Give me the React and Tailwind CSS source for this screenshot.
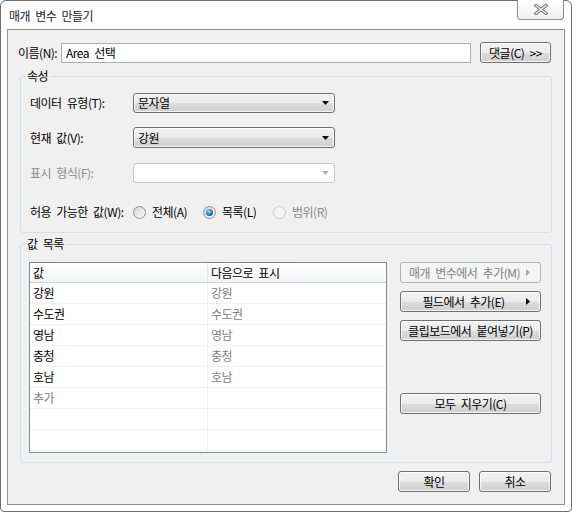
import React from 'react';

const btnFace =
  'border-[#707070] bg-[linear-gradient(#f2f2f2_0%,#ebebeb_50%,#dddddd_51%,#cfcfcf_100%)] shadow-[inset_0_0_0_1px_rgba(255,255,255,0.75)] text-black';
const btnDisabled = 'border-[#adb2b5] bg-[#f4f4f4] text-[#838383]';

const Arrow = ({ color = '#000' }) => (
  <svg width="4" height="7" viewBox="0 0 4 7">
    <path d="M0 0L4 3.5L0 7Z" fill={color} />
  </svg>
);

const WinButton = ({ children, disabled = false, arrow = false, className = '' }) => (
  <div
    className={`flex h-[21px] items-center rounded-[3px] border ${disabled ? btnDisabled : btnFace} ${className}`}
  >
    <span className="flex-1 text-center">{children}</span>
    {arrow && (
      <span className="flex w-[14px] justify-start">
        <Arrow color={disabled ? '#a8a8a8' : '#000'} />
      </span>
    )}
  </div>
);

const Combo = ({ value, disabled = false, height = 'h-[20px]' }) => (
  <div
    className={`flex ${height} w-[202px] items-center justify-between rounded-[3px] border pl-[4px] pr-[5px] ${
      disabled ? 'border-[#c5c5c5] bg-white' : btnFace
    }`}
  >
    <span>{value}</span>
    <svg width="7" height="4" viewBox="0 0 7 4">
      <path d="M0 0H7L3.5 4Z" fill={disabled ? '#b0b0b0' : '#000'} />
    </svg>
  </div>
);

const Radio = ({ label, checked = false, disabled = false }) => (
  <div className={`flex w-[70px] items-center gap-[6px] ${disabled ? 'text-[#8a8a8a]' : ''}`}>
    <span
      className={`flex h-[13px] w-[13px] items-center justify-center rounded-full border ${
        disabled
          ? 'border-[#c8c8c8] bg-[#f4f4f4]'
          : 'border-[#8e8f8f] bg-[linear-gradient(135deg,#d4d4d4,#fcfcfc)]'
      }`}
    >
      {checked && (
        <span className="h-[7px] w-[7px] rounded-full bg-[radial-gradient(circle_at_40%_35%,#a8dcf7,#1f73b5_55%,#0c4a85)]" />
      )}
    </span>
    <span>{label}</span>
  </div>
);

const rows = [
  ['강원', '강원'],
  ['수도권', '수도권'],
  ['영남', '영남'],
  ['충청', '충청'],
  ['호남', '호남'],
  ['추가', ''],
  ['', ''],
  ['', ''],
];

const App = () => {
  return (
    <div className="h-[512px] w-[572px] bg-white font-['Noto_Sans_CJK_KR','Noto_Sans',sans-serif] text-[12px] tracking-[-0.5px] [word-spacing:3px] text-black">
      <div className="flex h-full w-full flex-col rounded-t-[6px] rounded-b-[4px] border border-[#6e6e6e] px-[6px] pb-[6px]">
        {/* title bar */}
        <div className="flex h-[28px] items-start justify-between">
          <div className="pl-[2px] pt-[7px] leading-[16px] text-[#1b1b1b]">매개 변수 만들기</div>
          <div className="-mt-px mr-px flex h-[20px] w-[47px] items-center justify-center rounded-b-[4px] border border-t-0 border-[#8c8c8c] bg-[linear-gradient(#ffffff,#f0f0f0)]">
            <svg width="14" height="11" viewBox="0 0 14 11">
              <path d="M2 1.5L12 9.5M12 1.5L2 9.5" stroke="#6f6f6f" strokeWidth="3.4" strokeLinecap="square" />
              <path d="M2 1.5L12 9.5M12 1.5L2 9.5" stroke="#f4f4f4" strokeWidth="1.4" strokeLinecap="square" />
            </svg>
          </div>
        </div>

        {/* panel */}
        <div className="flex flex-1 flex-col border border-[#8e8f8f] bg-[#f0f0f0] pl-[12px] pr-[12px] pt-[12px] pb-[12px]">
          {/* name row */}
          <div className="-ml-[2px] flex h-[21px] items-center">
            <div className="w-[43px]">이름(N):</div>
            <div className="flex h-[20px] w-[410px] items-center border border-[#abadb3] bg-white pl-[4px]">Area 선택</div>
            <WinButton className="ml-[9px] w-[71px]">댓글(C) &gt;&gt;</WinButton>
          </div>

          {/* 속성 */}
          <fieldset className="mt-[6px] rounded-[3px] border border-[#d5dfe5]">
            <legend className="ml-[4px] px-[2px] leading-[14px]">속성</legend>
            <div className="flex flex-col pl-[9px] pt-[10px] pb-[12px]">
              <div className="flex h-[20px] items-center">
                <div className="w-[103px]">데이터 유형(T):</div>
                <Combo value="문자열" />
              </div>
              <div className="mt-[14px] flex h-[21px] items-center">
                <div className="w-[103px]">현재 값(V):</div>
                <Combo value="강원" height="h-[21px]" />
              </div>
              <div className="mt-[15px] flex h-[20px] items-center">
                <div className="w-[103px] text-[#8a8a8a]">표시 형식(F):</div>
                <Combo value="" disabled />
              </div>
              <div className="mt-[21px] flex h-[16px] items-center">
                <div className="w-[103px]">허용 가능한 값(W):</div>
                <Radio label="전체(A)" />
                <Radio label="목록(L)" checked />
                <Radio label="범위(R)" disabled />
              </div>
            </div>
          </fieldset>

          {/* 값 목록 */}
          <fieldset className="mt-[4px] rounded-[3px] border border-[#d5dfe5]">
            <legend className="ml-[4px] px-[2px] leading-[14px]">값 목록</legend>
            <div className="flex pl-[8px] pt-[11px] pb-[9px]">
              <div className="h-[191px] w-[358px] overflow-hidden border border-[#828790] bg-white">
                <div className="flex h-[20px] border-b border-[#d5d5d5] bg-[linear-gradient(#ffffff,#f2f3f5)]">
                  <div className="flex w-[177px] items-center pl-[3px]">값</div>
                  <div className="flex flex-1 items-center border-l border-[#e5e5e5] pl-[3px]">다음으로 표시</div>
                </div>
                {rows.map(([v, d], i) => (
                  <div key={i} className="flex h-[21px] border-b border-[#f0f0f0]">
                    <div className={`flex w-[177px] items-center pl-[3px] ${v === '추가' ? 'text-[#808080]' : ''}`}>{v}</div>
                    <div className="flex flex-1 items-center border-l border-[#f0f0f0] pl-[3px] text-[#808080]">{d}</div>
                  </div>
                ))}
              </div>

              <div className="ml-[13px] flex w-[141px] flex-col">
                <WinButton disabled arrow className="pl-[2px]">매개 변수에서 추가(M)</WinButton>
                <WinButton arrow className="mt-[8px]">필드에서 추가(E)</WinButton>
                <WinButton className="mt-[8px]">클립보드에서 붙여넣기(P)</WinButton>
                <WinButton className="mt-[52px]">모두 지우기(C)</WinButton>
              </div>
            </div>
          </fieldset>

          {/* bottom buttons */}
          <div className="mt-[8px] mr-px flex justify-end gap-[9px]">
            <WinButton className="w-[72px]">확인</WinButton>
            <WinButton className="w-[72px]">취소</WinButton>
          </div>
        </div>
      </div>
    </div>
  );
};

export default App;
